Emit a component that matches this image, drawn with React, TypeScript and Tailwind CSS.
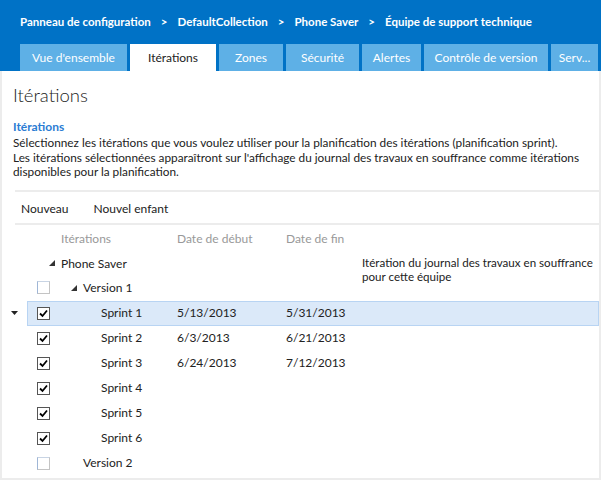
import React from "react";

const font = { fontFamily: 'Lato, "Open Sans", sans-serif' };

function Check({ checked }: { checked: boolean }) {
  if (!checked)
    return (
      <div className="w-[13px] h-[13px] border border-[#c4c4c4] border-l-[#9fb6d6] border-t-[#c8d4e4] bg-white" />
    );
  return (
    <div className="w-[13px] h-[13px] border border-[#555] bg-white flex items-center justify-center">
      <svg width="9" height="9" viewBox="0 0 9 9">
        <path d="M1 4.5 L3.5 7 L8 1.5" stroke="#000" strokeWidth="1.8" fill="none" />
      </svg>
    </div>
  );
}

function Tri() {
  return (
    <svg width="6" height="6" viewBox="0 0 6 6">
      <path d="M6 0 L6 6 L0 6 Z" fill="#333" />
    </svg>
  );
}

const tabs = [
  { t: "Vue d'ensemble", w: "w-[107px]" },
  { t: "Itérations", w: "w-[86px]", active: true },
  { t: "Zones", w: "w-[64px]" },
  { t: "Sécurité", w: "w-[73px]" },
  { t: "Alertes", w: "w-[59px]" },
  { t: "Contrôle de version", w: "w-[124px]" },
  { t: "Serv...", w: "w-[47px]" },
];

const sprints = [
  { n: "Sprint 1", s: "5/13/2013", e: "5/31/2013", sel: true },
  { n: "Sprint 2", s: "6/3/2013", e: "6/21/2013" },
  { n: "Sprint 3", s: "6/24/2013", e: "7/12/2013" },
  { n: "Sprint 4", s: "", e: "" },
  { n: "Sprint 5", s: "", e: "" },
  { n: "Sprint 6", s: "", e: "" },
];

export default function App() {
  return (
    <div className="w-[601px] h-[480px] bg-white overflow-hidden text-[12px] text-[#222]" style={font}>
      <div className="bg-[#0072c6] h-[71px] flex flex-col">
        <div className="h-[44px] flex items-center pl-[20px] text-white font-bold text-[11.5px] pb-[1px] whitespace-nowrap">
          <span>Panneau de configuration</span>
          <span className="mx-[10px]">&gt;</span>
          <span>DefaultCollection</span>
          <span className="mx-[10px]">&gt;</span>
          <span>Phone Saver</span>
          <span className="mx-[10px]">&gt;</span>
          <span>Équipe de support technique</span>
        </div>
        <div className="flex gap-[3px] pl-[20px] h-[27px]">
          {tabs.map((t) => (
            <div
              key={t.t}
              className={`${t.w} shrink-0 flex items-center justify-center text-[12px] whitespace-nowrap ${
                t.active ? "bg-white text-[#222]" : "bg-[#5eb0e6] text-white"
              }`}
            >
              {t.t}
            </div>
          ))}
        </div>
      </div>
      <div className="h-[409px] border-l-2 border-r-2 border-b-2 border-[#ececec] pl-[11px] pr-0">
        <div className="pt-[12px] text-[18.5px] font-light leading-[24px] text-[#222]">Itérations</div>
        <div className="mt-[12px] text-[#2b7cd3] font-bold leading-[15px]">Itérations</div>
        <div className="mt-[2px] leading-[14.5px] pr-[8px] text-[11.8px]">
          Sélectionnez les itérations que vous voulez utiliser pour la planification des itérations (planification sprint).
          <br />
          Les itérations sélectionnées apparaîtront sur l'affichage du journal des travaux en souffrance comme itérations
          disponibles pour la planification.
        </div>
        <div className="mt-[10px] ml-[2px] border-t-2 border-b-2 border-[#ececec] h-[35px] flex items-center pl-[6px] pt-[3px]">
          <span>Nouveau</span>
          <span className="ml-[25px]">Nouvel enfant</span>
        </div>
        <div className="flex h-[29px] items-center text-[#999]">
          <span className="ml-[48px] w-[116px]">Itérations</span>
          <span className="w-[109px]">Date de début</span>
          <span>Date de fin</span>
        </div>
        <div className="flex h-[21px]">
          <div className="ml-[36px] w-[12px] shrink-0 flex items-start pt-[6px]">
            <Tri />
          </div>
          <span className="leading-[15px] w-[301px] shrink-0 pt-[2px]">Phone Saver</span>
          <span className="leading-[14px] whitespace-nowrap mt-[2px] text-[11.6px]">
            Itération du journal des travaux en souffrance
            <br />
            pour cette équipe
          </span>
        </div>
        <div className="flex h-[26px] items-center">
          <div className="ml-[24px] w-[34px] shrink-0">
            <Check checked={false} />
          </div>
          <div className="w-[12px] shrink-0 flex items-center">
            <Tri />
          </div>
          <span>Version 1</span>
        </div>
        {sprints.map((s) => (
          <div key={s.n} className="flex h-[25px] items-center relative">
            {s.sel && (
              <svg width="7" height="4" viewBox="0 0 7 4" className="absolute left-[-2px] top-[10px]">
                <path d="M0 0 L7 0 L3.5 4 Z" fill="#222" />
              </svg>
            )}
            <div
              className={`ml-[14px] flex-1 h-[25px] flex items-center ${
                s.sel ? "bg-[#dbe9f9] border border-[#b8d4f3]" : "border border-transparent"
              }`}
            >
              <div className="ml-[9px] w-[64px] shrink-0">
                <Check checked />
              </div>
              <span className="w-[76px]">{s.n}</span>
              <span className="w-[109px]">{s.s}</span>
              <span>{s.e}</span>
            </div>
          </div>
        ))}
        <div className="flex h-[25px] items-center">
          <div className="ml-[24px] w-[46px] shrink-0">
            <Check checked={false} />
          </div>
          <span>Version 2</span>
        </div>
      </div>
    </div>
  );
}
